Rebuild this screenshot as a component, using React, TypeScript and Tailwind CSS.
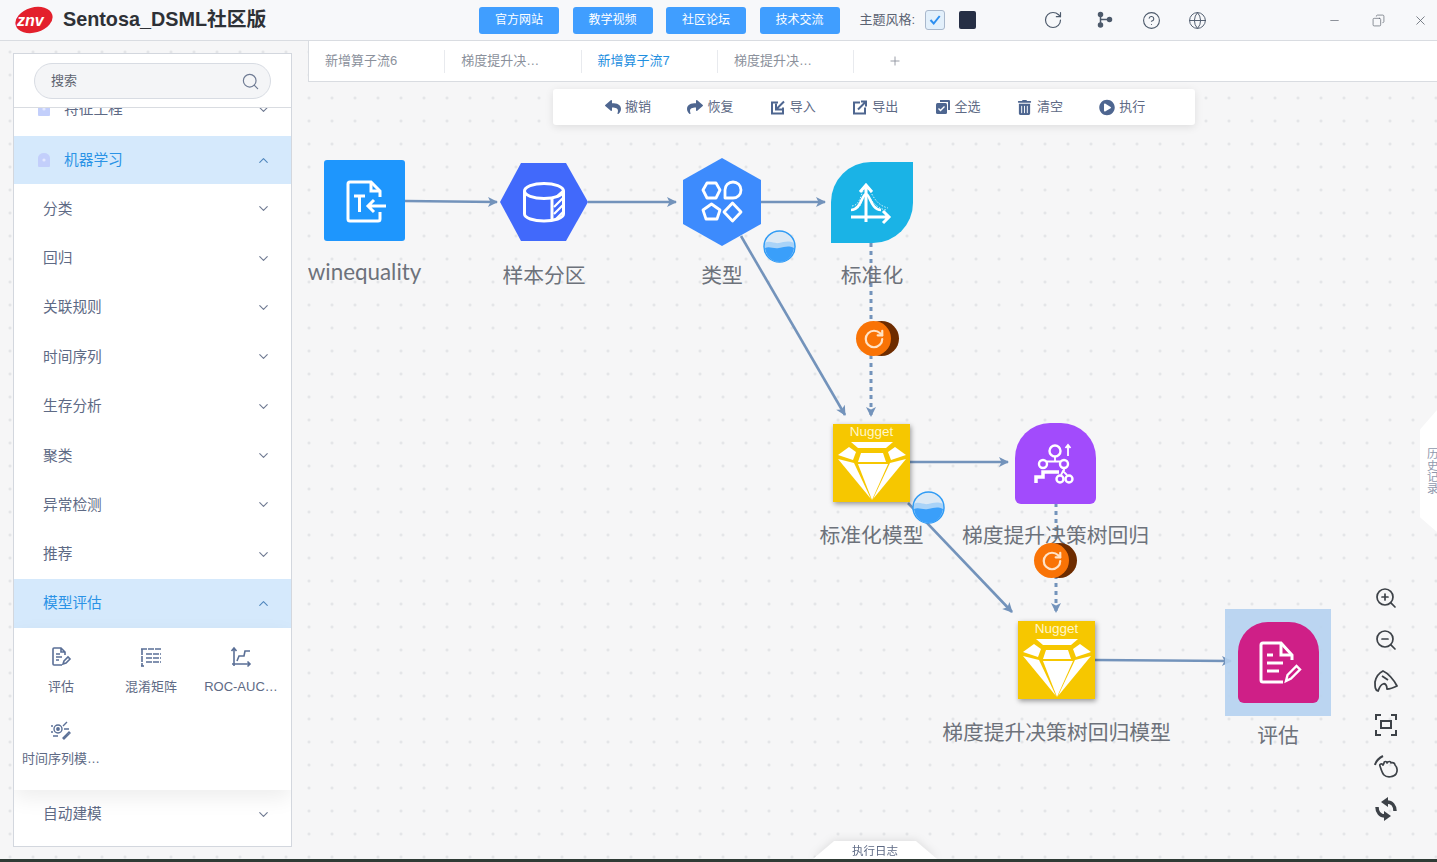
import { ChevronDown, ChevronUp, CircleHelp, Copy, Globe, Minus, Plus, RotateCw, Search, X, ZoomIn, ZoomOut } from "lucide-react";
import { FaPlayCircle, FaReply, FaShare, FaTrashAlt } from "react-icons/fa";
import type { ReactNode } from "react";

function Logo() {
  return (
    <svg width="40" height="30" viewBox="0 0 40 30">
      <ellipse cx="20" cy="15" rx="19" ry="12.5" fill="#e3202c" transform="rotate(-16 20 15)" />
      <text x="3" y="21" fill="#fff" fontSize="16" fontWeight="700" fontFamily="Liberation Sans, sans-serif" fontStyle="italic">
        znv
      </text>
    </svg>
  );
}

function ForkIcon() {
  return (
    <svg width="18" height="18" viewBox="0 0 18 18" fill="#4d5a6b" stroke="#4d5a6b" strokeWidth="1.5">
      <circle cx="4.5" cy="3.5" r="2" />
      <circle cx="4.5" cy="14" r="2" />
      <circle cx="13.5" cy="8.5" r="2" />
      <path d="M4.5 3.5V14M4.5 8.5h9" />
    </svg>
  );
}

function Header() {
  return (
    <header className="flex h-[41px] shrink-0 items-center border-b border-[#d9dce1] bg-[#f7f8fa]">
      <div className="ml-[14px] flex w-[465px] items-center gap-[9px]">
        <Logo />
        <span className="text-[19.8px] font-bold text-[#2e3136]">Sentosa_DSML社区版</span>
      </div>
      <div className="flex gap-[13.5px]">
        {["官方网站", "教学视频", "社区论坛", "技术交流"].map((t) => (
          <button key={t} className="h-[27px] w-[80px] rounded-[3px] bg-[#409eff] text-[12px] text-white">
            {t}
          </button>
        ))}
      </div>
      <span className="ml-[20px] text-[13px] text-[#5b6372]">主题风格:</span>
      <span className="ml-[10px] flex h-[20px] w-[20px] items-center justify-center rounded-[3px] border border-[#a9b8cc] bg-[#e3f0fb]">
        <svg width="14" height="14" viewBox="0 0 14 14" fill="none" stroke="#2d8ff0" strokeWidth="2">
          <path d="M2.5 7l3.2 3.5 6-7.5" />
        </svg>
      </span>
      <span className="ml-[14px] h-[18px] w-[17px] rounded-[2px] bg-[#262f45]" />
      <div className="ml-[67px] flex items-center text-[#4d5a6b]">
        <RotateCw size={20} strokeWidth={1.4} />
        <span className="ml-[33px]"><ForkIcon /></span>
        <CircleHelp size={19} strokeWidth={1.4} className="ml-[28px]" />
        <Globe size={19} strokeWidth={1.2} className="ml-[27px]" />
      </div>
      <div className="ml-[121px] flex items-center text-[#5f6670]">
        <Minus size={13} strokeWidth={1.3} />
        <Copy size={13} strokeWidth={1.3} className="ml-[31px] -scale-x-100" />
        <X size={15} strokeWidth={1.3} className="ml-[28px]" />
      </div>
    </header>
  );
}

function Row({ label, open, active, icon }: { label: string; open?: boolean; active?: boolean; icon?: boolean }) {
  return (
    <div className={`flex h-full items-center justify-between pr-[20px] ${active ? "bg-[#d5e9fc] text-[#2b93e6]" : "text-[#5e6a85]"} ${icon ? "pl-[23px]" : "pl-[29px]"}`}>
      <span className="flex items-center">
        {icon && (
          <svg width="14" height="14" viewBox="0 0 14 14" className="mr-[13px]">
            <path d="M1 5a6 5 0 0 1 12 0v8a1 1 0 0 1-1 1H2a1 1 0 0 1-1-1z" fill="#c3cffb" />
            <circle cx="7" cy="7" r="1.6" fill="#e4e9fe" />
          </svg>
        )}
        {label}
      </span>
      {open ? <ChevronUp size={15} strokeWidth={1.8} className="text-[#4f86bd]" /> : <ChevronDown size={15} strokeWidth={1.8} className="text-[#6f7a92]" />}
    </div>
  );
}

function EvalGlyph() {
  return (
    <svg width="22" height="22" viewBox="0 0 22 22" fill="none" stroke="#5a6f96" strokeWidth="1.6">
      <path d="M15 9V6l-4-4H4a1 1 0 0 0-1 1v15a1 1 0 0 0 1 1h8M11 2v4h4M6 8h4M6 11h6M6 14h3" />
      <path d="M13 18l1-3 4-4 2 2-4 4z" />
    </svg>
  );
}

function MatrixGlyph() {
  return (
    <svg width="22" height="22" viewBox="0 0 22 22" fill="none" stroke="#5a6f96" strokeWidth="1.6">
      <path d="M1 3h20M2 3v17M6 8h15M6 12h15M6 16h15" strokeDasharray="6 1" />
      <path d="M1 20h3" />
    </svg>
  );
}

function RocGlyph() {
  return (
    <svg width="22" height="22" viewBox="0 0 22 22" fill="none" stroke="#5a6f96" strokeWidth="1.6">
      <path d="M4 2v18M20 18H2M1.5 5L4 2l2.5 3M17.5 15.5L20 18l-2.5 2.5" />
      <path d="M7 15l2-5h5l1-5h5" />
    </svg>
  );
}

function SeriesGlyph() {
  return (
    <svg width="22" height="22" viewBox="0 0 22 22" fill="none" stroke="#5a6f96" strokeWidth="1.4">
      <circle cx="8" cy="11" r="4" />
      <circle cx="8" cy="11" r="1.2" fill="#5a6f96" />
      <path d="M1 8h2M1 14h2M3 18h5M13 8l4-4M14 11h5M13 20l6-6 1 1-6 6z" />
    </svg>
  );
}

const MODEL_TOOLS: { label: string; icon: ReactNode }[] = [
  { label: "评估", icon: <EvalGlyph /> },
  { label: "混淆矩阵", icon: <MatrixGlyph /> },
  { label: "ROC-AUC…", icon: <RocGlyph /> },
  { label: "时间序列模…", icon: <SeriesGlyph /> },
];

function Sidebar() {
  const rows = ["分类", "回归", "关联规则", "时间序列", "生存分析", "聚类", "异常检测", "推荐"];
  return (
    <div className="w-[308px] shrink-0 pb-[12px] pl-[13px] pr-[16px] pt-[12px]">
      <aside className="flex h-full flex-col overflow-hidden border border-[#d3d7de] bg-white text-[14.7px]">
        <div className="z-10 h-[54px] shrink-0 border-b border-[#d9dce1] bg-white pl-[20px] pt-[9px]">
          <div className="flex h-[36px] w-[237px] items-center justify-between rounded-[18px] border border-[#d8dce3] bg-[#f4f5f7] pl-[16px] pr-[10px]">
            <span className="text-[13px] text-[#5e6470]">搜索</span>
            <Search size={19} strokeWidth={1.5} className="text-[#6f7b94]" />
          </div>
        </div>
        <div className="mt-[-25px]">
          <div className="h-[53px]"><Row label="特征工程" icon /></div>
          <div className="h-[48px]"><Row label="机器学习" icon open active /></div>
          {rows.map((r) => (
            <div key={r} className="h-[49.375px]"><Row label={r} /></div>
          ))}
          <div className="h-[49px]"><Row label="模型评估" open active /></div>
          <div className="relative z-[1] h-[162px] bg-white pl-[2px] pt-[18px] shadow-[0_8px_20px_rgba(0,0,0,0.07)]">
            <div className="grid w-[270px] grid-cols-3 gap-y-[22px]">
              {MODEL_TOOLS.map((t) => (
                <div key={t.label} className="flex flex-col items-center text-[13px] text-[#5e6a85]">
                  {t.icon}
                  <span className="mt-[10px] h-[18px] whitespace-nowrap leading-[18px]">{t.label}</span>
                </div>
              ))}
            </div>
          </div>
          <div className="h-[48px]"><Row label="自动建模" /></div>
        </div>
      </aside>
    </div>
  );
}

function Tabs() {
  const tabs = ["新增算子流6", "梯度提升决…", "新增算子流7", "梯度提升决…"];
  return (
    <div className="flex h-[41px] shrink-0 items-center border-b border-l border-[#d9dce1] bg-white text-[13px] text-[#8b919c]">
      {tabs.map((t, i) => (
        <div key={i} className={`flex h-[23px] w-[136.3px] items-center border-r border-[#e8eaee] pl-[16px] ${i === 2 ? "text-[#1f8fdf]" : ""}`}>
          {t}
        </div>
      ))}
      <Plus size={14} strokeWidth={1.5} className="ml-[34px] text-[#8b919c]" />
    </div>
  );
}

function ImportIcon({ out }: { out?: boolean }) {
  return (
    <svg width="17" height="17" viewBox="0 0 16 16" fill="none" stroke="#4e6690" strokeWidth="2">
      <path d="M8 3H2v11h11V8" />
      {out ? <path d="M6 10l7-7M9 2h5v5" /> : <path d="M14 2L7 9M6 4v6h6" />}
    </svg>
  );
}

function SelectAllIcon() {
  return (
    <svg width="16" height="16" viewBox="0 0 16 16">
      <path d="M5 1h9a1 1 0 0 1 1 1v9h-2V3H5z" fill="#4e6690" />
      <rect x="1" y="4" width="11" height="11" rx="1.5" fill="#4e6690" />
      <path d="M3.5 9.5l2 2 4-4" fill="none" stroke="#fff" strokeWidth="1.4" />
    </svg>
  );
}

function Toolbar() {
  const items: { label: string; icon: ReactNode }[] = [
    { label: "撤销", icon: <FaReply size={16} /> },
    { label: "恢复", icon: <FaShare size={16} /> },
    { label: "导入", icon: <ImportIcon /> },
    { label: "导出", icon: <ImportIcon out /> },
    { label: "全选", icon: <SelectAllIcon /> },
    { label: "清空", icon: <FaTrashAlt size={15} /> },
    { label: "执行", icon: <FaPlayCircle size={17} /> },
  ];
  return (
    <div className="absolute left-[245px] top-[7px] z-10 flex h-[36px] w-[642px] items-center rounded-[3px] bg-white pl-[52px] shadow-[0_2px_8px_rgba(0,0,0,0.1)]">
      {items.map((it) => (
        <div key={it.label} className="flex w-[82.4px] items-center gap-[4px] text-[13px] text-[#5e6a85]">
          <span className="flex w-[16px] justify-center text-[#4e6690]">{it.icon}</span>
          {it.label}
        </div>
      ))}
    </div>
  );
}

function FileIcon() {
  return (
    <svg width="81" height="81" viewBox="0 0 81 81" fill="none" stroke="#fff" strokeWidth="3" className="absolute inset-0">
      <path d="M56 37v-6l-9-9H26a2 2 0 0 0-2 2v35a2 2 0 0 0 2 2h28a2 2 0 0 0 2-2v-7" />
      <path d="M47 22v9h9M30 36h11M35.5 36v16" />
      <path d="M62 46H44M50 40l-6 6 6 6" />
    </svg>
  );
}

function CylinderIcon() {
  return (
    <svg width="88" height="78" viewBox="0 0 88 78" className="absolute inset-0">
      <polygon points="21,0 66,0 88,39 66,78 21,78 0,39" fill="#4169fb" />
      <g fill="none" stroke="#fff" strokeWidth="3">
        <ellipse cx="44" cy="28" rx="19.5" ry="7.5" />
        <path d="M24.5 28v23c0 4 9 7 19.5 7s19.5-3 19.5-7V28" />
        <path d="M52 35v22" />
        <path d="M56 34L64 27M54 44l10-10M54 51l10-10M55 57l8-8" strokeWidth="2.2" />
      </g>
    </svg>
  );
}

function ShapesIcon() {
  return (
    <svg width="78" height="88" viewBox="0 0 78 88" className="absolute inset-0">
      <polygon points="39,0 78,22 78,66 39,88 0,66 0,22" fill="#3d8bfd" />
      <g fill="none" stroke="#fff" strokeWidth="2.8" strokeLinejoin="round">
        <polygon points="24,25 33,25 37,32 33,40 24,40 20,32" />
        <path d="M42 40V32a8 8 0 1 1 8 8z" />
        <polygon points="28.5,46 37,52 34,61 23,61 20,52" />
        <polygon points="49.5,45 58,54 49.5,63 41,54" />
      </g>
    </svg>
  );
}

function BellIcon() {
  return (
    <svg width="82" height="81" viewBox="0 0 82 81" fill="none" stroke="#fff" className="absolute inset-0">
      <path d="M35 60V23M29 30l6-7 6 7M20 55h38M52 49l6 6-6 6" strokeWidth="3" />
      <path d="M20 48c10 0 11-16 15-16s5 16 15 16" strokeWidth="2.6" />
      <path d="M21 44c10-1 9-18 14-18 6 0 6 16 22 20M21 48c12 0 8-14 14-14 5 0 8 13 21 14" strokeWidth="0.8" strokeDasharray="1.5 1.5" />
    </svg>
  );
}

function Gem() {
  return (
    <svg width="77" height="78" viewBox="0 0 77 78" fill="#fff" className="absolute inset-0">
      <polygon points="18,18 60,18 53,24 25,24" />
      <polygon points="5,31 16,23 23,28 20,36" />
      <polygon points="28,29 50,29 53,38 25,38" />
      <polygon points="73,31 62,23 55,28 58,36" />
      <polygon points="5,35 21,39 38,75" />
      <polygon points="25,40 55,40 39,76" />
      <polygon points="73,35 57,39 40,75" />
    </svg>
  );
}

function TreeIcon() {
  return (
    <svg width="81" height="81" viewBox="0 0 81 81" fill="none" stroke="#fff" strokeWidth="2.4" className="absolute inset-0">
      <circle cx="40" cy="28" r="5.5" />
      <circle cx="28" cy="41" r="4" />
      <circle cx="49" cy="41" r="4" />
      <circle cx="45" cy="56" r="3.5" />
      <circle cx="54" cy="56" r="3.5" />
      <path d="M40 34v4M32 38.5h13M49 45v3M46 52l2-4 4 4M53 22v11M50.5 25l2.5-3 2.5 3" strokeWidth="1.8" />
      <path d="M21 60v-6h7v-5h16" strokeWidth="3.5" />
    </svg>
  );
}

function ReportIcon() {
  return (
    <svg width="81" height="81" viewBox="0 0 81 81" fill="none" stroke="#fff" strokeWidth="3" className="absolute inset-0">
      <path d="M54 38v-5l-11-12H25a2 2 0 0 0-2 2v35a2 2 0 0 0 2 2h20" />
      <path d="M43 21v12h11M29 33h6M29 41h16M29 49h12" />
      <path d="M48 59l1.5-6 9-9 3.5 3.5-9 9z" strokeWidth="2.4" />
    </svg>
  );
}

function Wave() {
  return (
    <svg width="33" height="33" viewBox="0 0 33 33">
      <circle cx="16.5" cy="16.5" r="15.5" fill="#dce9f5" stroke="#2f9bf5" strokeWidth="1.5" />
      <path d="M2 13c5-3 9 1 14 0s9-3 15 0c1 9-6 19-14.500 19S1 24 2 13z" fill="#a9d3f8" />
      <path d="M2 18c5-2 8 1 14 0s9-3 15 0c-1 8-7 14-14.500 14S3 26 2 18z" fill="#3a9ffa" />
    </svg>
  );
}

function Running() {
  return (
    <span className="relative flex h-[35px] w-[43px]">
      <span className="absolute left-[8px] h-[35px] w-[35px] rounded-full bg-[#6e2c00]" />
      <span className="absolute left-0 flex h-[35px] w-[35px] items-center justify-center rounded-full bg-[#f97306] text-[#ffe3c7]">
        <RotateCw size={22} strokeWidth={2.4} />
      </span>
    </span>
  );
}

function CanvasNode({ pos, shape, labelPos, label, children }: { pos: string; shape: string; labelPos: string; label: string; children: ReactNode }) {
  return (
    <div className={`absolute flex flex-col items-center ${pos}`}>
      <div className={`relative shrink-0 ${shape}`}>{children}</div>
      <span className={`whitespace-nowrap leading-[28px] text-[#6d727b] ${labelPos}`}>{label}</span>
    </div>
  );
}

function Edges() {
  const color = "#7393bb";
  return (
    <svg className="absolute inset-0" width="1129" height="777" viewBox="308 82 1129 777" fill="none" stroke={color} strokeWidth="2.6">
      <defs>
        <marker id="arrow" markerUnits="userSpaceOnUse" markerWidth="12" markerHeight="12" refX="10" refY="6" orient="auto">
          <path d="M1 1L11 6L1 11L3.5 6z" fill={color} stroke="none" />
        </marker>
      </defs>
      <path d="M405 201L497 202" markerEnd="url(#arrow)" />
      <path d="M588 202H676" markerEnd="url(#arrow)" />
      <path d="M761 202H825" markerEnd="url(#arrow)" />
      <path d="M741 236L845 415" markerEnd="url(#arrow)" />
      <path d="M871 243V416" strokeDasharray="4 4" strokeWidth="3" markerEnd="url(#arrow)" />
      <path d="M910 462H1008" markerEnd="url(#arrow)" />
      <path d="M908 503L1012 612" markerEnd="url(#arrow)" />
      <path d="M1056 503V612" strokeDasharray="4 4" strokeWidth="3" markerEnd="url(#arrow)" />
      <path d="M1095 660L1231 661" markerEnd="url(#arrow)" />
    </svg>
  );
}

function CropIcon() {
  return (
    <svg width="24" height="24" viewBox="0 0 24 24" fill="none" stroke="#3d4248" strokeWidth="2">
      <path d="M2 7V2h5M17 2h5v5M2 17v5h5M22 17v5h-5" />
      <rect x="7" y="8" width="10" height="7" />
    </svg>
  );
}

function ArrowTool() {
  return (
    <svg width="24" height="24" viewBox="0 0 24 24" fill="none" stroke="#3d4248" strokeWidth="1.8" strokeLinejoin="round">
      <path d="M9 1C14 3 20 10 23 16C19 18 15 19 13 19C13 15 11 13 9 14C6 15 5 19 4 21C1 20 1 17 1 12C2 7 5 3 9 1z" />
      <path d="M8 6L14 10" />
    </svg>
  );
}

function HandTool() {
  return (
    <svg width="24" height="24" viewBox="0 0 24 24" fill="none" stroke="#3d4248" strokeWidth="1.7" strokeLinejoin="round">
      <path d="M6 11C5 9 8 8 9 10L10 8C10 6 13 6 13 8C14 6 17 6 17 8C18 7 21 8 21 10C23 12 24 16 22 19C20 22 13 23 10 20C8 18 7 14 6 11z" />
      <path d="M1 10C2 6 5 3 9 1" strokeWidth="2" />
    </svg>
  );
}

function SwapTool() {
  return (
    <svg width="24" height="24" viewBox="0 0 24 24" fill="none" stroke="#3d4248" strokeWidth="3.5">
      <path d="M21 14C21 9 18 5 13 5" />
      <path d="M3 10C3 15 6 19 11 19" />
      <polygon points="14,0 14,10 7,5" fill="#3d4248" stroke="none" />
      <polygon points="10,14 10,24 17,19" fill="#3d4248" stroke="none" />
    </svg>
  );
}

function CanvasTools() {
  return (
    <div className="absolute left-[1066px] top-[504px] z-10 flex w-[24px] flex-col items-center gap-[18.2px] text-[#3d4248]">
      <ZoomIn size={24} strokeWidth={1.7} />
      <ZoomOut size={24} strokeWidth={1.7} />
      <ArrowTool />
      <CropIcon />
      <HandTool />
      <SwapTool />
    </div>
  );
}

function Canvas() {
  return (
    <div className="relative min-h-0 flex-1 overflow-hidden">
      <Edges />
      <Toolbar />
      <CanvasNode pos="left-[16px] top-[78px] w-[81px]" shape="h-[81px] w-[81px] rounded-[3px] bg-[#1e96fd]" labelPos="mt-[17px] font-['Lato',sans-serif] text-[22.4px]" label="winequality">
        <FileIcon />
      </CanvasNode>
      <CanvasNode pos="left-[192px] top-[81px] w-[88px]" shape="h-[78px] w-[88px]" labelPos="mt-[21px] text-[20.8px]" label="样本分区">
        <CylinderIcon />
      </CanvasNode>
      <CanvasNode pos="left-[375px] top-[76px] w-[78px]" shape="h-[88px] w-[78px]" labelPos="mt-[16px] text-[20.8px]" label="类型">
        <ShapesIcon />
      </CanvasNode>
      <CanvasNode pos="left-[523px] top-[80px] w-[82px]" shape="h-[81px] w-[82px] rounded-[40px_0_40px_0] bg-[#1ab3e6]" labelPos="mt-[19px] text-[20.8px]" label="标准化">
        <BellIcon />
      </CanvasNode>
      <CanvasNode pos="left-[525px] top-[342px] w-[77px]" shape="h-[78px] w-[77px] bg-[#f6c700] shadow-[1px_2px_5px_rgba(0,0,0,0.4)]" labelPos="mt-[20px] text-[20.8px]" label="标准化模型">
        <span className="absolute inset-x-0 top-0 text-center text-[13.5px] leading-[15px] text-[#fff6c9]">Nugget</span>
        <Gem />
      </CanvasNode>
      <CanvasNode pos="left-[707px] top-[341px] w-[81px]" shape="h-[81px] w-[81px] rounded-[35px_35px_6px_6px] bg-[#a24bfc]" labelPos="mt-[18px] text-[20.8px]" label="梯度提升决策树回归">
        <TreeIcon />
      </CanvasNode>
      <CanvasNode pos="left-[710px] top-[539px] w-[77px]" shape="h-[78px] w-[77px] bg-[#f6c700] shadow-[1px_2px_5px_rgba(0,0,0,0.4)]" labelPos="mt-[20px] text-[20.8px]" label="梯度提升决策树回归模型">
        <span className="absolute inset-x-0 top-0 text-center text-[13.5px] leading-[15px] text-[#fff6c9]">Nugget</span>
        <Gem />
      </CanvasNode>
      <CanvasNode pos="left-[917px] top-[527px] w-[106px]" shape="flex h-[107px] w-[106px] items-center justify-center bg-[#b5d1f0]/90" labelPos="mt-[6px] text-[20.8px]" label="评估">
        <div className="relative h-[81px] w-[81px] rounded-[30px_30px_6px_6px] bg-[#cf1f87]">
          <ReportIcon />
        </div>
      </CanvasNode>
      <span className="absolute left-[455px] top-[148px]"><Wave /></span>
      <span className="absolute left-[604px] top-[409px]"><Wave /></span>
      <span className="absolute left-[548px] top-[239px]"><Running /></span>
      <span className="absolute left-[726px] top-[461px]"><Running /></span>
      <CanvasTools />
      <div className="absolute right-0 top-[328px] flex h-[122px] w-[17px] items-center justify-center bg-white [clip-path:polygon(100%_0,0_16%,0_88%,100%_100%)]">
        <span className="pl-[5px] text-[11.5px] leading-[11.5px] text-[#8f98ad] [writing-mode:vertical-rl]">历史记录</span>
      </div>
      <div className="absolute bottom-0 left-[505px] drop-shadow-[0_-1px_4px_rgba(0,0,0,0.1)]">
        <div className="flex h-[18px] w-[124px] items-center justify-center bg-white pt-[3px] text-[11.5px] text-[#5e6a85] [clip-path:polygon(17%_0,83%_0,100%_100%,0_100%)]">执行日志</div>
      </div>
    </div>
  );
}

export default function App() {
  return (
    <div className="flex h-screen w-screen flex-col overflow-hidden bg-[#f6f6f7] bg-[radial-gradient(circle,#dfe1e4_1px,transparent_1.5px)] bg-[size:23px_23px] bg-[position:-1.5px_-5.5px] font-['Liberation_Sans','Noto_Sans_CJK_SC',sans-serif]">
      <Header />
      <div className="flex min-h-0 flex-1">
        <Sidebar />
        <main className="flex min-w-0 flex-1 flex-col">
          <Tabs />
          <Canvas />
        </main>
      </div>
      <div className="h-[3px] shrink-0 bg-[#2f3b35]" />
    </div>
  );
}
